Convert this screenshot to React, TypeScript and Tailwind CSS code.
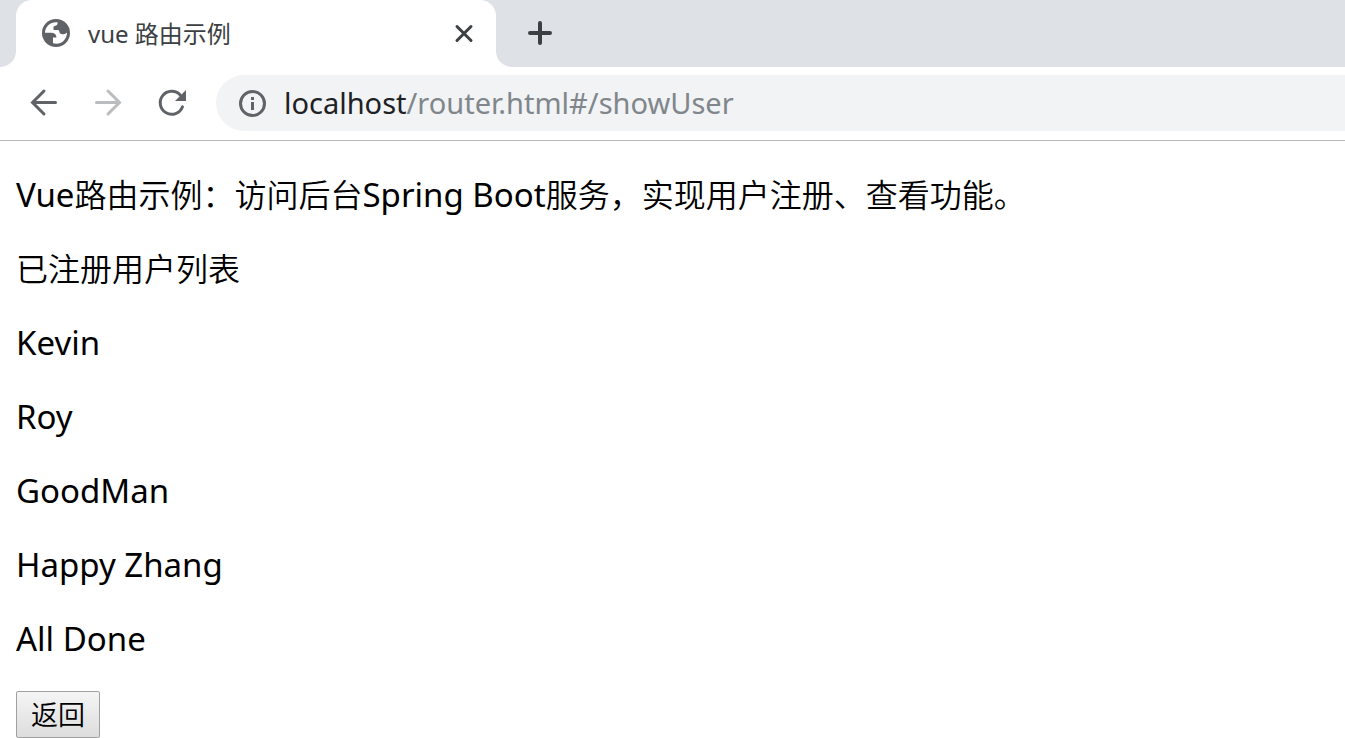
import type { ReactNode } from 'react';

const users = ['Kevin', 'Roy', 'GoodMan', 'Happy Zhang', 'All Done'];

function Icon({ children }: { children: ReactNode }) {
  return (
    <svg viewBox="0 0 32 32" className="size-8 shrink-0" fill="none" stroke="currentColor" aria-hidden="true">
      {children}
    </svg>
  );
}

function Globe() {
  return (
    <Icon>
      <circle cx="16" cy="15" r="14" fill="currentColor" stroke="none" />
      <path
        d="M17.500 4.200C10.500 3.500 5 8.500 5 14.800H11C14.500 14.800 16.500 16.500 16.500 19.500H13V25.300C20.500 27.500 27 22 27 14.500C25.500 16.500 21.500 17 20 15.300C19 14.200 19.500 12 18 12H13.500V9C13.500 7.500 17.500 8 17.500 5.500Z"
        fill="white"
        stroke="none"
      />
    </Icon>
  );
}

function Latin({ children }: { children: ReactNode }) {
  return <span className="text-[33px] font-normal">{children}</span>;
}

export default function App() {
  return (
    <div className="min-h-screen bg-white font-['Noto_Sans','Noto_Sans_CJK_SC',sans-serif] text-black">
      <header className="border-b border-[#b6b6b6]">
        <div className="flex h-[67px] bg-[#dee1e6]">
          <div className="flex w-4 bg-white">
            <div className="flex-1 rounded-br-2xl bg-[#dee1e6]" />
          </div>
          <div className="flex w-[480px] items-center rounded-t-2xl bg-white pr-4 pl-6 text-[#5f6368]">
            <Globe />
            <span className="ml-4 flex-1 text-2xl text-[#3c4043]">vue 路由示例</span>
            <button aria-label="Close tab" className="text-[#3c4043]">
              <Icon>
                <path d="M9 8.500l14 14M23 8.500l-14 14" strokeWidth="3" strokeLinecap="round" />
              </Icon>
            </button>
          </div>
          <div className="flex w-4 bg-white">
            <div className="flex-1 rounded-bl-2xl bg-[#dee1e6]" />
          </div>
          <button aria-label="New tab" className="ml-3 text-[#3c4043]">
            <Icon>
              <path d="M16 5v20M6 15h20" strokeWidth="4" strokeLinecap="round" />
            </Icon>
          </button>
        </div>
        <nav className="flex h-[73px] items-center pb-0.5 pl-7 text-[#5f6368]">
          <button aria-label="Back">
            <Icon>
              <path d="M27.500 15.500H4.500M16 4L4.500 15.500 16 27" strokeWidth="3" strokeLinecap="round" />
            </Icon>
          </button>
          <button aria-label="Forward" className="ml-8 text-[#babcbe]">
            <Icon>
              <path d="M4.500 15.500h23M16 4L27.500 15.500 16 27" strokeWidth="3" strokeLinecap="round" />
            </Icon>
          </button>
          <button aria-label="Reload" className="ml-8">
            <Icon>
              <path d="M26.500 19.800A11.500 11.500 0 1 1 24.200 8" strokeWidth="3" strokeLinecap="round" />
              <path d="M30 3v11H19z" fill="currentColor" stroke="none" />
            </Icon>
          </button>
          <div className="ml-7 flex h-14 flex-1 items-center rounded-l-full bg-[#f1f3f4] pl-5">
            <Icon>
              <circle cx="16.500" cy="16.500" r="12" strokeWidth="3" />
              <path d="M16.500 15v8M16.500 10v3" strokeWidth="3" />
            </Icon>
            <span className="ml-4 text-[29px] leading-10 text-[#80868b]">
              <span className="text-[#202124]">localhost</span>/router.html#/showUser
            </span>
          </div>
        </nav>
      </header>
      <main className="px-4 pt-[33px] text-[32px] leading-[42px] font-[350]">
        <div className="flex flex-col gap-8">
          <p>
            <Latin>Vue</Latin>路由示例：访问后台<Latin>Spring Boot</Latin>服务，实现用户注册、查看功能。
          </p>
          <p>已注册用户列表</p>
          {users.map((user) => (
            <p key={user}>
              <Latin>{user}</Latin>
            </p>
          ))}
        </div>
        <button className="mt-[31px] rounded-xs border border-[#a0a0a0] bg-linear-to-b from-[#f5f5f5] to-[#dddddd] px-3.5 pt-0.5 pb-px text-[27px]">
          返回
        </button>
      </main>
    </div>
  );
}
